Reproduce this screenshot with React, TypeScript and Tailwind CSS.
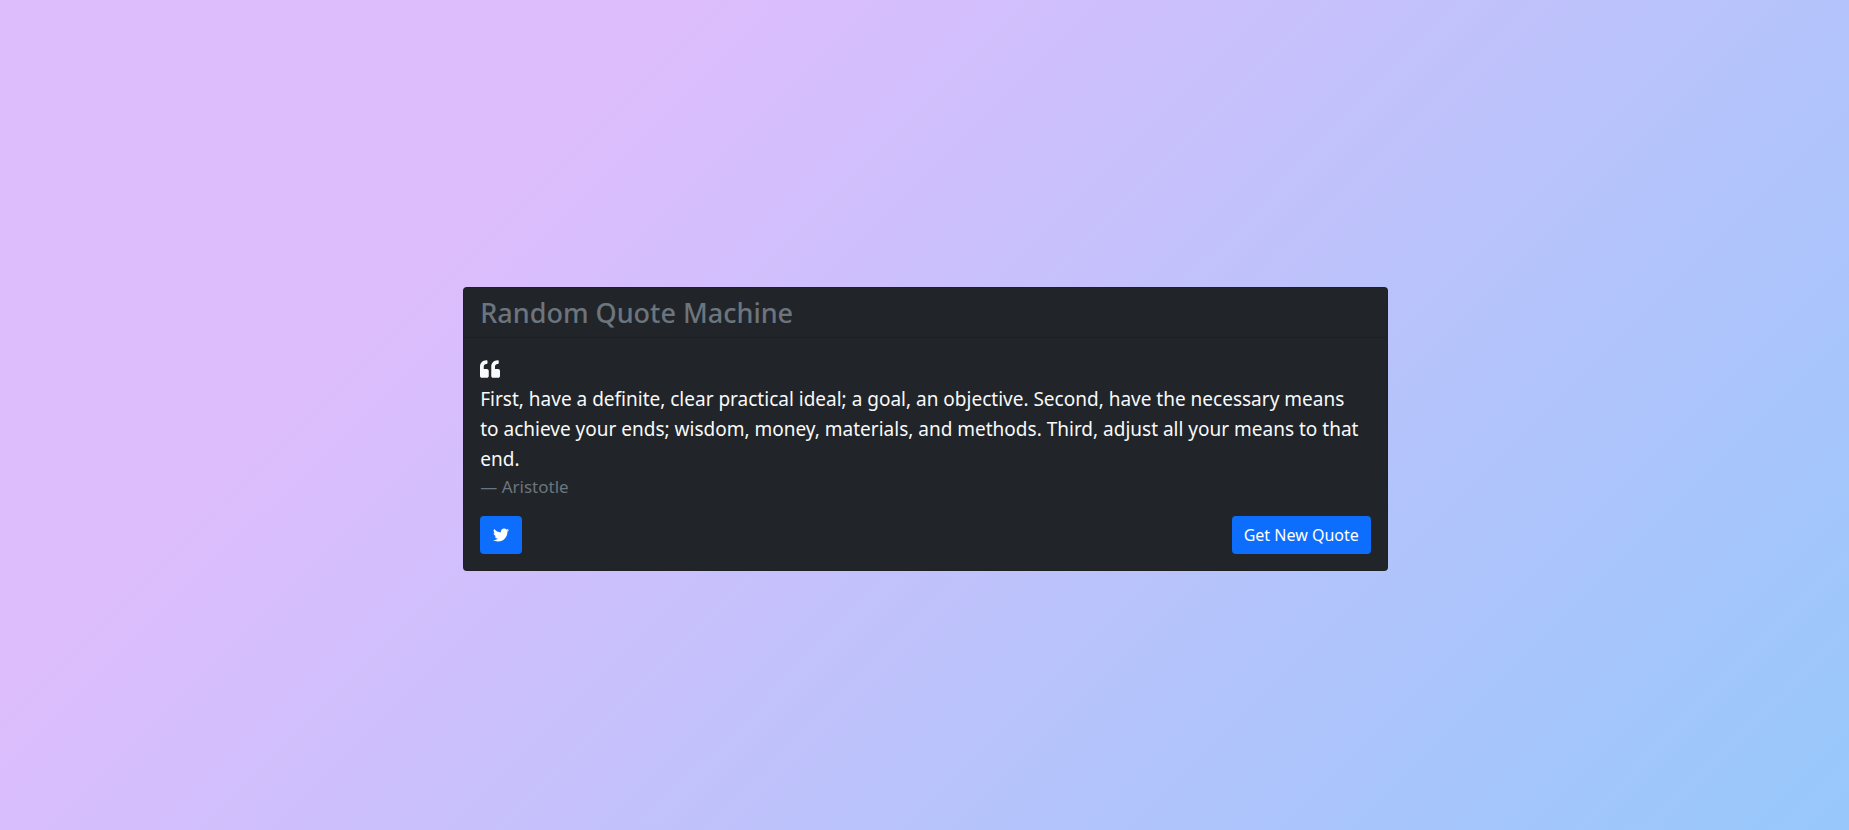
import { FaQuoteLeft, FaTwitter } from "react-icons/fa";

const quote = {
  text: "First, have a definite, clear practical ideal; a goal, an objective. Second, have the necessary means to achieve your ends; wisdom, money, materials, and methods. Third, adjust all your means to that end.",
  author: "Aristotle",
};

export default function App() {
  return (
    <main className="flex min-h-screen items-center justify-center bg-linear-[315deg,#96c8fb_-1%,#ddbdfc_74%] pt-7 pl-0.5 font-['Noto_Sans',sans-serif]">
      <section className="w-[50vw] rounded border border-black/10 bg-[#212529]">
        <header className="border-b border-black/15 px-4 py-2">
          <h1 className="text-[27px] leading-[33px] font-medium text-[#6c757d]">Random Quote Machine</h1>
        </header>
        <div className="p-4">
          <blockquote className="pr-2 text-[19px] leading-[30px] text-[#f8f9fa]">
            <div className="flex h-[30px] items-center">
              <FaQuoteLeft size={20} aria-hidden="true" />
            </div>
            <p>{quote.text}</p>
          </blockquote>
          <p className="mb-4 text-[17px] leading-[26px] text-[#6c757d]">— {quote.author}</p>
          <div className="flex items-center justify-between">
            <a
              href="https://twitter.com/intent/tweet"
              aria-label="Tweet this quote"
              className="flex h-[38px] items-center rounded bg-[#0d6efd] px-[13px] text-white"
            >
              <FaTwitter size={16} aria-hidden="true" />
            </a>
            <button type="button" className="h-[38px] rounded bg-[#0d6efd] px-3 text-base leading-6 text-white">
              Get New Quote
            </button>
          </div>
        </div>
      </section>
    </main>
  );
}
